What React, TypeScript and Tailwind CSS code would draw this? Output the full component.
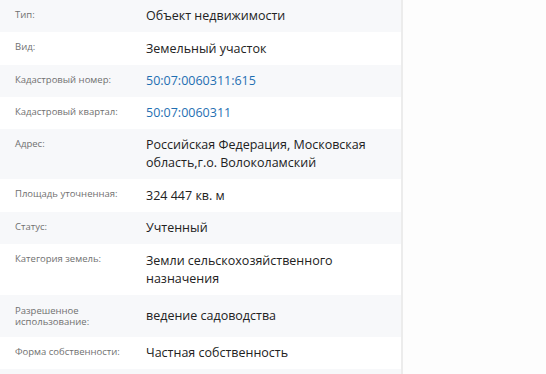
import React from "react";

type Row = {
  label: string;
  value: string;
  link?: boolean;
  striped: boolean;
  twoLineLabel?: boolean;
  h: string;
};

const rows: Row[] = [
  { label: "Тип:", value: "Объект недвижимости", striped: true, h: "min-h-[31px]" },
  { label: "Вид:", value: "Земельный участок", striped: false, h: "min-h-[33px]" },
  { label: "Кадастровый номер:", value: "50:07:0060311:615", link: true, striped: true, h: "min-h-[32px]" },
  { label: "Кадастровый квартал:", value: "50:07:0060311", link: true, striped: false, h: "min-h-[32px]" },
  { label: "Адрес:", value: "Российская Федерация, Московская область,г.о. Волоколамский", striped: true, h: "min-h-[50px]" },
  { label: "Площадь уточненная:", value: "324 447 кв. м", striped: false, h: "min-h-[33px]" },
  { label: "Статус:", value: "Учтенный", striped: true, h: "min-h-[32px]" },
  { label: "Категория земель:", value: "Земли сельскохозяйственного назначения", striped: false, h: "min-h-[51px]" },
  { label: "Разрешенное использование:", value: "ведение садоводства", striped: true, twoLineLabel: true, h: "min-h-[42px]" },
  { label: "Форма собственности:", value: "Частная собственность", striped: false, h: "min-h-[32px]" },
  { label: "", value: "", striped: true, h: "min-h-[32px]" },
];

export default function App() {
  return (
    <div
      className="flex h-[374px] w-[546px] overflow-hidden bg-[#fdfdfd]"
      style={{ fontFamily: '"Open Sans", "Noto Sans", Arial, sans-serif' }}
    >
      <div className="w-[401px] shrink-0 bg-white">
        {rows.map((r, i) => (
          <div
            key={i}
            className={`flex ${r.h} ${r.striped ? "bg-[#f7f8fa]" : "bg-white"}`}
          >
            <div
              className={
                r.twoLineLabel
                  ? "w-[146px] shrink-0 self-center pl-[15px] pr-2 text-[9.5px] leading-[11px] text-[#707070]"
                  : "w-[146px] shrink-0 self-start pt-[8px] pl-[15px] pr-2 text-[9.5px] leading-[14px] text-[#707070]"
              }
            >
              {r.label}
            </div>
            <div
              className={`self-center py-[7px] pr-6 text-[12.5px] leading-[18px] ${
                r.link ? "text-[#1f6fb2]" : "text-[#222222]"
              }`}
            >
              {r.value || "\u00a0"}
            </div>
          </div>
        ))}
      </div>
      <div className="w-[2px] shrink-0 bg-[#ececec]" />
      <div className="flex-1" />
    </div>
  );
}
